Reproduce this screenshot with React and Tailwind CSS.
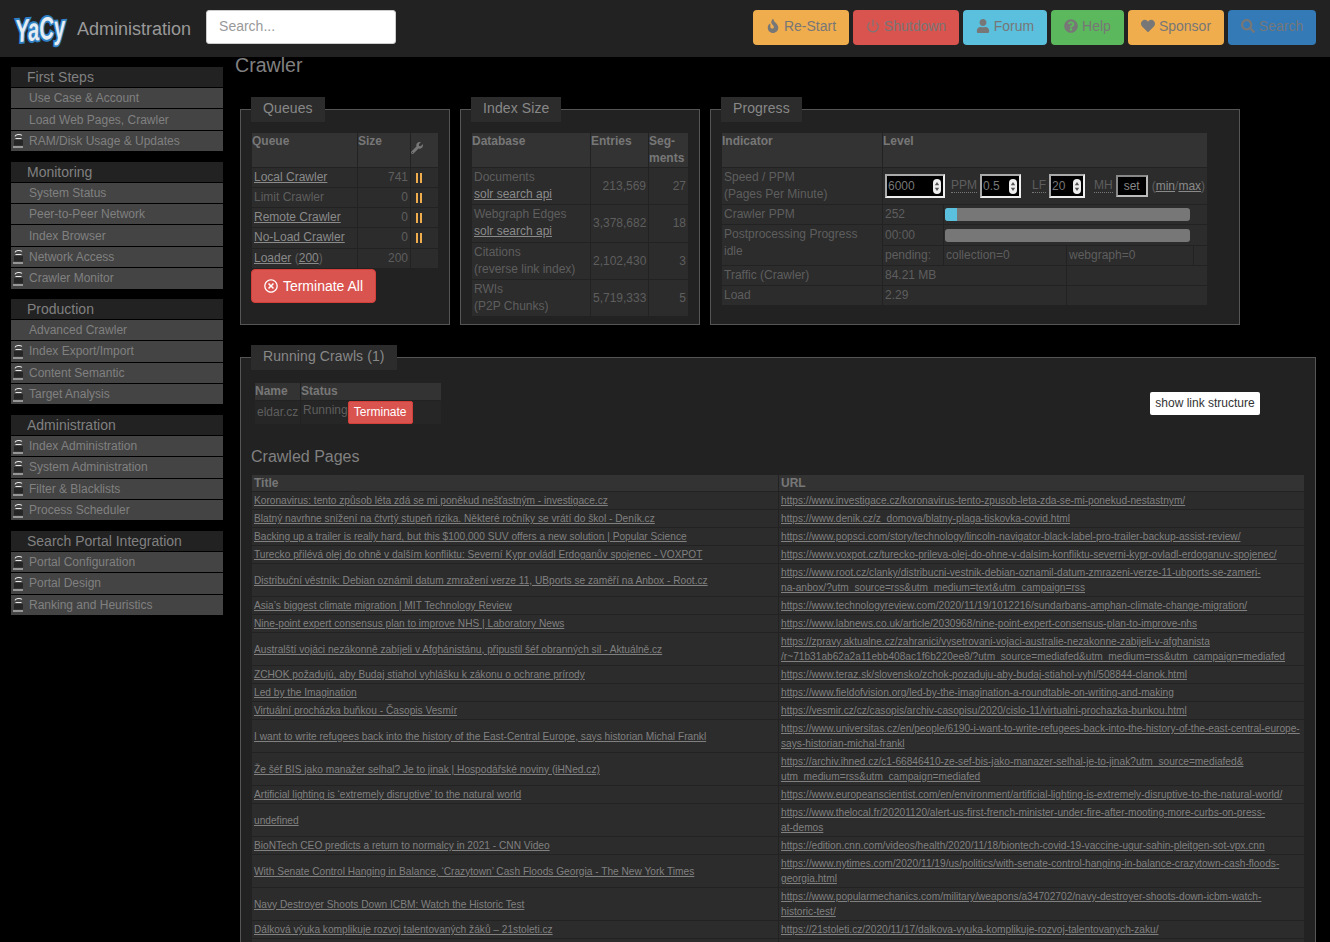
import React from 'react'
import { FaFire, FaUser, FaQuestionCircle, FaHeart, FaSearch, FaWrench, FaRegTimesCircle } from 'react-icons/fa'
import { Power } from 'lucide-react'

const navButtons = [
  { label: 'Re-Start', icon: FaFire, cls: 'w-[96px] bg-[#f0ad4e]' },
  { label: 'Shutdown', icon: Power, cls: 'w-[106px] bg-[#d9534f]' },
  { label: 'Forum', icon: FaUser, cls: 'w-[84px] bg-[#5bc0de]' },
  { label: 'Help', icon: FaQuestionCircle, cls: 'w-[73px] bg-[#5cb85c]' },
  { label: 'Sponsor', icon: FaHeart, cls: 'w-[96px] bg-[#f0ad4e]' },
  { label: 'Search', icon: FaSearch, cls: 'w-[88px] bg-[#337ab7]' },
]

const menu = [
  { title: 'First Steps', items: [['Use Case & Account'], ['Load Web Pages, Crawler'], ['RAM/Disk Usage & Updates', true]] },
  { title: 'Monitoring', items: [['System Status'], ['Peer-to-Peer Network'], ['Index Browser'], ['Network Access', true], ['Crawler Monitor', true]] },
  { title: 'Production', items: [['Advanced Crawler'], ['Index Export/Import', true], ['Content Semantic', true], ['Target Analysis', true]] },
  { title: 'Administration', items: [['Index Administration', true], ['System Administration', true], ['Filter & Blacklists', true], ['Process Scheduler', true]] },
  { title: 'Search Portal Integration', items: [['Portal Configuration', true], ['Portal Design', true], ['Ranking and Heuristics', true]] },
]

const pages = [
  ['Koronavirus: tento způsob léta zdá se mi poněkud nešťastným - investigace.cz', 'https://www.investigace.cz/koronavirus-tento-zpusob-leta-zda-se-mi-ponekud-nestastnym/'],
  ['Blatný navrhne snížení na čtvrtý stupeň rizika. Některé ročníky se vrátí do škol - Deník.cz', 'https://www.denik.cz/z_domova/blatny-plaga-tiskovka-covid.html'],
  ['Backing up a trailer is really hard, but this $100,000 SUV offers a new solution | Popular Science', 'https://www.popsci.com/story/technology/lincoln-navigator-black-label-pro-trailer-backup-assist-review/'],
  ['Turecko přilévá olej do ohně v dalším konfliktu: Severní Kypr ovládl Erdoganův spojenec - VOXPOT', 'https://www.voxpot.cz/turecko-prileva-olej-do-ohne-v-dalsim-konfliktu-severni-kypr-ovladl-erdoganuv-spojenec/'],
  ['Distribuční věstník: Debian oznámil datum zmražení verze 11, UBports se zaměří na Anbox - Root.cz', 'https://www.root.cz/clanky/distribucni-vestnik-debian-oznamil-datum-zmrazeni-verze-11-ubports-se-zameri-\nna-anbox/?utm_source=rss&utm_medium=text&utm_campaign=rss'],
  ['Asia’s biggest climate migration | MIT Technology Review', 'https://www.technologyreview.com/2020/11/19/1012216/sundarbans-amphan-climate-change-migration/'],
  ['Nine-point expert consensus plan to improve NHS | Laboratory News', 'https://www.labnews.co.uk/article/2030968/nine-point-expert-consensus-plan-to-improve-nhs'],
  ['Australští vojáci nezákonně zabíjeli v Afghánistánu, připustil šéf obranných sil - Aktuálně.cz', 'https://zpravy.aktualne.cz/zahranici/vysetrovani-vojaci-australie-nezakonne-zabijeli-v-afghanista\n/r~71b31ab62a2a11ebb408ac1f6b220ee8/?utm_source=mediafed&utm_medium=rss&utm_campaign=mediafed'],
  ['ZCHOK požadujú, aby Budaj stiahol vyhlášku k zákonu o ochrane prírody', 'https://www.teraz.sk/slovensko/zchok-pozaduju-aby-budaj-stiahol-vyhl/508844-clanok.html'],
  ['Led by the Imagination', 'https://www.fieldofvision.org/led-by-the-imagination-a-roundtable-on-writing-and-making'],
  ['Virtuální procházka buňkou - Časopis Vesmír', 'https://vesmir.cz/cz/casopis/archiv-casopisu/2020/cislo-11/virtualni-prochazka-bunkou.html'],
  ['I want to write refugees back into the history of the East-Central Europe, says historian Michal Frankl', 'https://www.universitas.cz/en/people/6190-i-want-to-write-refugees-back-into-the-history-of-the-east-central-europe-\nsays-historian-michal-frankl'],
  ['Že šéf BIS jako manažer selhal? Je to jinak | Hospodářské noviny (iHNed.cz)', 'https://archiv.ihned.cz/c1-66846410-ze-sef-bis-jako-manazer-selhal-je-to-jinak?utm_source=mediafed&\nutm_medium=rss&utm_campaign=mediafed'],
  ['Artificial lighting is ‘extremely disruptive’ to the natural world', 'https://www.europeanscientist.com/en/environment/artificial-lighting-is-extremely-disruptive-to-the-natural-world/'],
  ['undefined', 'https://www.thelocal.fr/20201120/alert-us-first-french-minister-under-fire-after-mooting-more-curbs-on-press-\nat-demos'],
  ['BioNTech CEO predicts a return to normalcy in 2021 - CNN Video', 'https://edition.cnn.com/videos/health/2020/11/18/biontech-covid-19-vaccine-ugur-sahin-pleitgen-sot-vpx.cnn'],
  ['With Senate Control Hanging in Balance, ‘Crazytown’ Cash Floods Georgia - The New York Times', 'https://www.nytimes.com/2020/11/19/us/politics/with-senate-control-hanging-in-balance-crazytown-cash-floods-\ngeorgia.html'],
  ['Navy Destroyer Shoots Down ICBM: Watch the Historic Test', 'https://www.popularmechanics.com/military/weapons/a34702702/navy-destroyer-shoots-down-icbm-watch-\nhistoric-test/'],
  ['Dálková výuka komplikuje rozvoj talentovaných žáků – 21stoleti.cz', 'https://21stoleti.cz/2020/11/17/dalkova-vyuka-komplikuje-rozvoj-talentovanych-zaku/'],
]

// small open padlock in front of the protected menu items
function Lock() {
  return (
    <svg width="11" height="15" viewBox="0 0 11 15" className="shrink-0">
      <path d="M2 3.4C2.6 1.4 7 .8 9 2.4" fill="none" stroke="#e8e8e8" strokeWidth="1.1" />
      <path d="M2.5 5.5H8.5" stroke="#e8e8e8" strokeWidth="1" />
      <rect x="1" y="7" width="9" height="5.5" fill="#262626" />
      <rect x="0" y="13.5" width="10" height="1" fill="#e8e8e8" />
    </svg>
  )
}

function Logo() {
  return (
    <svg width="56" height="32" viewBox="0 0 56 32" className="mt-[2px] shrink-0 overflow-visible">
      <text
        x="3"
        y="28"
        textLength="50"
        lengthAdjust="spacingAndGlyphs"
        transform="rotate(-5 28 16)"
        fontFamily="'Liberation Sans', sans-serif"
        fontWeight="700"
        fontStyle="italic"
        fontSize="32"
        fill="#e6edf3"
        stroke="#2f80c4"
        strokeWidth="4"
        paintOrder="stroke"
      >
        YaCy
      </text>
    </svg>
  )
}

function Box({ title, className, children }) {
  return (
    <fieldset className={`border border-[#555] bg-[#222] ${className}`}>
      <legend className="ml-[10px] bg-[#2c2c2c] px-3 pb-[2px] text-sm leading-[23px] tracking-[0.1px] text-[#888]">{title}</legend>
      {children}
    </fieldset>
  )
}

const th = 'bg-[#333] p-0 align-top text-left font-bold text-[#777]'
const td = 'bg-[#2c2c2c] p-0 px-[2px] text-[#5e5e5e]'
const tdNum = 'bg-[#2c2c2c] p-0 px-[2px] text-right text-[#5e5e5e]'
const link = 'text-[#8a8a8a] underline'

function Pause() {
  return (
    <span className="ml-[3px] flex gap-[2px]">
      <span className="h-[10px] w-[2px] bg-[#f0ad4e]" />
      <span className="h-[10px] w-[2px] bg-[#f0ad4e]" />
    </span>
  )
}

function QueueTable() {
  const rows = [
    ['Local Crawler', '741', true],
    ['Limit Crawler', '0', false],
    ['Remote Crawler', '0', true],
    ['No-Load Crawler', '0', true],
  ]
  return (
    <table className="w-[188px] table-fixed border-separate border-spacing-[1px] text-xs leading-[17px]">
      <thead>
        <tr className="h-[34px]">
          <th className={`${th} w-[105px]`}>Queue</th>
          <th className={`${th} w-[52px]`}>Size</th>
          <th className={`${th} w-[27px]`}><FaWrench className="mt-[9px] text-[12px]" /></th>
        </tr>
      </thead>
      <tbody>
        {rows.map(([name, size, on], i) => (
          <tr key={name} className={i === 3 ? 'h-[20px]' : 'h-[19px]'}>
            <td className={`${td} ${i === 3 ? 'pb-px' : ''}`}>{on ? <span className={link}>{name}</span> : name}</td>
            <td className={`${tdNum} ${i === 3 ? 'pb-px' : ''}`}>{size}</td>
            <td className={td}><Pause /></td>
          </tr>
        ))}
        <tr className="h-[19px]">
          <td className={td}><span className={link}>Loader</span> (<span className={link}>200</span>)</td>
          <td className={tdNum}>200</td>
          <td className={td} />
        </tr>
      </tbody>
    </table>
  )
}

function IndexTable() {
  const rows = [
    ['Documents', 'solr search api', '213,569', '27', true],
    ['Webgraph Edges', 'solr search api', '3,378,682', '18', true],
    ['Citations', '(reverse link index)', '2,102,430', '3', false],
    ['RWIs', '(P2P Chunks)', '5,719,333', '5', false],
  ]
  return (
    <table className="w-[218px] table-fixed border-separate border-spacing-[1px] text-xs leading-[17px]">
      <thead>
        <tr className="h-[34px]">
          <th className={`${th} w-[118px]`}>Database</th>
          <th className={`${th} w-[57px]`}>Entries</th>
          <th className={`${th} w-[39px]`}>Seg-<br />ments</th>
        </tr>
      </thead>
      <tbody>
        {rows.map(([a, b, n, s, isLink], i) => (
          <tr key={a} className={i === 1 ? 'h-[37px]' : 'h-[36px]'}>
            <td className={`${td} pt-px align-top`}>{a}<br />{isLink ? <span className={link}>{b}</span> : b}</td>
            <td className={tdNum}>{n}</td>
            <td className={tdNum}>{s}</td>
          </tr>
        ))}
      </tbody>
    </table>
  )
}

function SpinInput({ value, className }) {
  return (
    <span className={`flex h-[24px] items-center border-2 border-[#aaa] border-r-[#eee] border-b-[#eee] bg-black pl-px pr-[2px] ${className}`}>
      <input readOnly value={value} className="w-full min-w-0 bg-transparent text-xs text-[#777] outline-none" />
      <svg width="8" height="15" viewBox="0 0 8 15" className="shrink-0">
        <rect width="8" height="15" rx="4" fill="#eee" />
        <path d="M4 3L6.2 6.2H1.8zM4 12L1.8 8.8H6.2z" fill="#555" />
      </svg>
    </span>
  )
}

function Abbr({ children, className }) {
  return <span className={`border-b border-dotted border-[#777] leading-[13px] text-[#5e5e5e] ${className}`}>{children}</span>
}

function Bar({ fill, className }) {
  return (
    <div className={`ml-px flex h-[13px] w-[245px] overflow-hidden rounded-[3px] bg-[#777] ${className}`}>
      {fill && <div className="w-[12px] bg-[#5bc0de]" />}
    </div>
  )
}

function ProgressTable() {
  return (
    <table className="w-[487px] table-fixed border-separate border-spacing-[1px] text-xs leading-[17px]">
      <colgroup>
        <col className="w-[160px]" />
        <col className="w-[60px]" />
        <col className="w-[122px]" />
        <col className="w-[126px]" />
        <col className="w-[13px]" />
      </colgroup>
      <thead>
        <tr className="h-[34px]">
          <th className={th}>Indicator</th>
          <th className={th} colSpan={4}>Level</th>
        </tr>
      </thead>
      <tbody>
        <tr className="h-[36px]">
          <td className={td}>Speed / PPM<br />(Pages Per Minute)</td>
          <td className={`${td} !px-0`} colSpan={4}>
            <div className="ml-[2px] flex items-center whitespace-nowrap">
              <SpinInput value="6000" className="w-[60px]" />
              <Abbr className="ml-[6px]">PPM</Abbr>
              <SpinInput value="0.5" className="ml-[3px] w-[41px]" />
              <Abbr className="ml-[11px]">LF</Abbr>
              <SpinInput value="20" className="ml-[3px] w-[36px]" />
              <Abbr className="ml-[9px]">MH</Abbr>
              <button className="ml-[3px] h-[22px] w-[32px] border-2 border-[#888] border-r-[#bbb] border-b-[#bbb] bg-black text-xs text-[#888]">set</button>
              <span className="ml-[4px] text-[#5e5e5e]">(<span className={link}>min</span>/<span className={link}>max</span>)</span>
            </div>
          </td>
        </tr>
        <tr className="h-[19px]">
          <td className={td}>Crawler PPM</td>
          <td className={td}>252</td>
          <td className={`${td} !px-0`} colSpan={3}><Bar fill className="-mt-px" /></td>
        </tr>
        <tr className="h-[20px]">
          <td className={`${td} pt-px align-top`} rowSpan={2}>Postprocessing Progress<br />idle</td>
          <td className={td}>00:00</td>
          <td className={`${td} !px-0`} colSpan={3}><Bar /></td>
        </tr>
        <tr className="h-[19px]">
          <td className={td}>pending:</td>
          <td className={td}>collection=0</td>
          <td className={td}>webgraph=0</td>
          <td className={td} />
        </tr>
        <tr className="h-[19px]">
          <td className={td}>Traffic (Crawler)</td>
          <td className={td} colSpan={2}>84.21 MB</td>
          <td className={td} colSpan={2} />
        </tr>
        <tr className="h-[19px]">
          <td className={td}>Load</td>
          <td className={td} colSpan={2}>2.29</td>
          <td className={td} colSpan={2} />
        </tr>
      </tbody>
    </table>
  )
}

function PagesTable() {
  return (
    <table className="ml-[10px] w-[1054px] table-fixed border-separate border-spacing-[1px] text-[10.17px] leading-[15px]">
      <thead>
        <tr className="h-[16px]">
          <th className={`${th} w-[526px] pl-[2px] text-xs leading-[16px]`}>Title</th>
          <th className={`${th} w-[525px] pl-[2px] text-xs leading-[16px]`}>URL</th>
        </tr>
      </thead>
      <tbody>
        {pages.map(([title, url]) => (
          <tr key={url}>
            <td className="bg-[#2c2c2c] px-[2px] py-px"><span className="text-[#808080] underline">{title}</span></td>
            <td className="bg-[#2c2c2c] px-[2px] py-px"><span className="whitespace-pre text-[#808080] underline">{url}</span></td>
          </tr>
        ))}
        <tr className="h-[17px]">
          <td className="bg-[#2c2c2c]" />
          <td className="bg-[#2c2c2c]" />
        </tr>
      </tbody>
    </table>
  )
}

export default function App() {
  return (
    <div className="h-[942px] overflow-hidden bg-black font-['Liberation_Sans',Arial,sans-serif]">
      {/* Top bar */}
      <nav className="flex h-[57px] items-start bg-[#222] pl-[12px] pr-[14px] pt-[10px]">
        <Logo />
        <span className="ml-[9px] mt-[8px] text-lg leading-[22px] text-[#999]">Administration</span>
        <input
          placeholder="Search..."
          className="ml-[15px] h-[34px] w-[190px] rounded-[3px] border border-[#ccc] bg-white px-3 pb-[2px] text-sm placeholder-[#999]"
        />
        <div className="ml-auto flex gap-[4px]">
          {navButtons.map(({ label, icon: Icon, cls }) => (
            <button key={label} className={`flex h-[35px] items-center justify-center gap-[4px] rounded-[4px] pb-[3px] text-sm text-[#777] ${cls}`}>
              <Icon size={14} />
              {label}
            </button>
          ))}
        </div>
      </nav>

      <div className="flex">
        {/* Left menu */}
        <aside className="ml-[11px] mt-[10px] w-[212px] shrink-0">
          {menu.map(group => (
            <div key={group.title} className="mb-[10.4px]">
              <div className="mb-px h-[20px] bg-[#222] pl-[16px] text-sm leading-[20px] text-[#808080]">{group.title}</div>
              {group.items.map(([name, locked]) => (
                <div key={name} className="mb-px flex h-[20.4px] items-center bg-[#444] pl-[2px] text-xs text-[#808080]">
                  <span className="w-[16px] shrink-0">{locked && <Lock />}</span>
                  {name}
                </div>
              ))}
            </div>
          ))}
        </aside>

        {/* Content */}
        <main className="ml-[12px] min-w-0 flex-1">
          <h1 className="text-[19.6px] leading-[16px] text-[#808080]">Crawler</h1>

          <div className="ml-[5px] mt-[24px] flex gap-[10px]">
            <Box title="Queues" className="h-[228px] w-[210px]">
              <div className="pl-[10px] pt-[10px]">
                <QueueTable />
                <button className="flex h-[34px] w-[125px] items-center justify-center gap-[5px] rounded-[4px] border border-[#d43f3a] bg-[#d9534f] pb-px text-sm text-white">
                  <FaRegTimesCircle className="text-[14px]" /> Terminate All
                </button>
              </div>
            </Box>
            <Box title="Index Size" className="h-[228px] w-[240px]">
              <div className="pl-[10px] pt-[10px]"><IndexTable /></div>
            </Box>
            <Box title="Progress" className="h-[228px] w-[530px]">
              <div className="pl-[10px] pt-[10px]"><ProgressTable /></div>
            </Box>
          </div>

          <Box title="Running Crawls (1)" className="ml-[5px] mt-[20px] w-[1076px]">
            <div className="flex items-start pl-[13px] pt-[12px]">
              <table className="w-[188px] table-fixed border-separate border-spacing-[1px] text-xs leading-[17px]">
                <thead>
                  <tr className="h-[17px]">
                    <th className={`${th} w-[45px]`}>Name</th>
                    <th className={th}>Status</th>
                  </tr>
                </thead>
                <tbody>
                  <tr className="h-[23px]">
                    <td className="bg-[#262626] p-0 pl-[2px] text-[#5e5e5e]">eldar.cz</td>
                    <td className="bg-[#262626] p-0 pl-[2px] text-[#5e5e5e]">
                      <div className="-mt-px flex">
                        <span className="mt-px">Running</span>
                        <button className="h-[23px] w-[65px] rounded-[2px] border border-[#d43f3a] bg-[#d9534f] text-xs text-white">Terminate</button>
                      </div>
                    </td>
                  </tr>
                </tbody>
              </table>
              <button className="ml-auto mr-[55px] mt-[10px] h-[23px] w-[110px] rounded-[2px] bg-white pb-px text-xs text-[#333]">show link structure</button>
            </div>
            <h2 className="ml-[10px] mt-[22px] text-base leading-[20px] text-[#808080]">Crawled Pages</h2>
            <div className="mt-[7px]"><PagesTable /></div>
          </Box>
        </main>
      </div>
    </div>
  )
}
